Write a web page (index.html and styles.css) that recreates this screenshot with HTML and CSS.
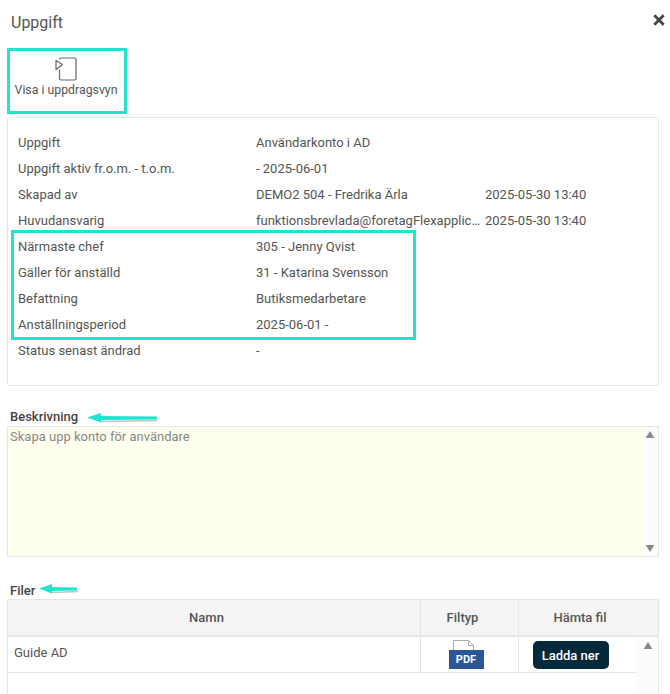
FILE: index.html
```html
<!DOCTYPE html>
<html lang="sv">
<head>
<meta charset="utf-8">
<title>Uppgift</title>
<link rel="stylesheet" href="styles.css">
</head>
<body>
<div class="dialog">
  <header class="head">
    <h1 class="title">Uppgift</h1>
    <svg class="close" viewBox="0 0 12 12" aria-label="Stäng"><path d="M2 2l8 8M10 2l-8 8"/></svg>
  </header>
  <div class="toolbar">
    <button class="view-btn mark">
      <svg class="view-icon" viewBox="0 0 22 24"><path d="M4.500 2.500a1.500 1.500 0 0 1 1.500-1.500h13.500a1.500 1.500 0 0 1 1.500 1.500v19a1.500 1.500 0 0 1-1.500 1.500H6a1.500 1.500 0 0 1-1.500-1.500v-9"/><path d="M1 3.500l6.500 4-6.500 5z"/></svg>
      <span>Visa i uppdragsvyn</span>
    </button>
  </div>
  <section class="panel">
    <div class="row"><span class="label">Uppgift</span><span class="value">Användarkonto i AD</span></div>
    <div class="row"><span class="label">Uppgift aktiv fr.o.m. - t.o.m.</span><span class="value">- 2025-06-01</span></div>
    <div class="row"><span class="label">Skapad av</span><span class="value">DEMO2 504 - Fredrika Ärla</span><span class="date">2025-05-30 13:40</span></div>
    <div class="row"><span class="label">Huvudansvarig</span><span class="value clip">funktionsbrevlada@foretagFlexapplication.se</span><span class="date">2025-05-30 13:40</span></div>
    <div class="group">
      <div class="group-mark mark"></div>
      <div class="row"><span class="label">Närmaste chef</span><span class="value">305 - Jenny Qvist</span></div>
      <div class="row"><span class="label">Gäller för anställd</span><span class="value">31 - Katarina Svensson</span></div>
      <div class="row"><span class="label">Befattning</span><span class="value">Butiksmedarbetare</span></div>
      <div class="row"><span class="label">Anställningsperiod</span><span class="value">2025-06-01 -</span></div>
    </div>
    <div class="row"><span class="label">Status senast ändrad</span><span class="value">-</span></div>
  </section>
  <h2 class="section-title desc-title">Beskrivning
    <svg class="arrow arrow-long" viewBox="0 0 72 10"><path class="arrow-shadow" d="M14 8.500l56-1"/><path class="arrow-fill" d="M0 4.500L14 0v3l56 .5v3l-56 .5v2.500z"/></svg>
  </h2>
  <div class="desc">
    <div class="desc-text">Skapa upp konto för användare</div>
    <div class="scroll">
      <svg class="tri" viewBox="0 0 10 8"><path d="M5 0l5 8H0z"/></svg>
      <svg class="tri" viewBox="0 0 10 8"><path d="M0 0h10L5 8z"/></svg>
    </div>
  </div>
  <h2 class="section-title files-title">Filer
    <svg class="arrow arrow-short" viewBox="0 0 40 10"><path class="arrow-shadow" d="M13 8.500l26-1"/><path class="arrow-fill" d="M0 4.500L13 0v3l25 .5v3l-25 .5v2.500z"/></svg>
  </h2>
  <div class="files">
    <div class="files-head">
      <div class="col-name head-name">Namn</div>
      <div class="col-type head-type">Filtyp</div>
      <div class="col-get">Hämta fil</div>
    </div>
    <div class="files-body">
      <div class="files-rows">
        <div class="file-row">
          <div class="col-name cell-name">Guide AD</div>
          <div class="col-type cell-center">
            <span class="pdf">
              <svg class="pdf-sheet" viewBox="0 0 22 12"><path d="M.5 11V.5h15l5 5V11M15.500.5v5h5"/></svg>
              <span class="pdf-tag">PDF</span>
            </span>
          </div>
          <div class="col-dl cell-center"><button class="dl">Ladda ner</button></div>
        </div>
      </div>
      <div class="scroll scroll-files">
        <svg class="tri" viewBox="0 0 10 8"><path d="M5 0l5 8H0z"/></svg>
      </div>
    </div>
  </div>
</div>
</body>
</html>
```
FILE: styles.css
```css
* { box-sizing: border-box; }
html, body { margin: 0; height: 100%; }
body {
  background: #fff;
  color: #555;
  font-family: Roboto, "Liberation Sans", sans-serif;
  font-size: 13px;
  overflow: hidden;
}
.dialog { padding: 0 11px 0 7px; height: 694px; overflow: hidden; }
.head {
  height: 45px;
  padding-left: 4px;
  display: flex;
  justify-content: space-between;
  align-items: center;
}
.title { margin: 0; font-size: 16px; font-weight: 400; color: #555; }
.close { width: 14px; height: 14px; margin-top: -5px; margin-right: -7px; }
.close path { fill: none; stroke: #444; stroke-width: 2.4; }
.toolbar { display: flex; height: 72px; }
.mark { border: 3px solid #1fe5cf; }
.view-btn {
  width: 120px;
  height: 66px;
  margin-top: 3px;
  padding: 6px 2px 0 0;
  background: #fff;
  color: #555;
  font: inherit;
  font-size: 12.3px;
  display: flex;
  flex-direction: column;
  align-items: center;
  gap: 2px;
}
.view-icon { width: 22px; height: 24px; margin-left: 9px; margin-right: 10px; flex: none; }
.view-icon path { fill: #fff; stroke: #666; stroke-width: 1.200; stroke-linejoin: round; }
.panel {
  height: 269px;
  border: 1px solid #e6e6e6;
  border-radius: 3px;
  padding: 12px 10px 0;
}
.row { display: flex; height: 26px; line-height: 26px; white-space: nowrap; }
.label { width: 238px; flex: none; }
.value { width: 229px; flex: none; }
.clip { overflow: hidden; text-overflow: ellipsis; padding-right: 4px; }
.group { position: relative; }
.group-mark {
  position: absolute;
  left: -7px;
  top: -4px;
  width: 405px;
  height: 110px;
  pointer-events: none;
}
.section-title {
  position: relative;
  margin: 0;
  padding-left: 3px;
  font-size: 13px;
  font-weight: 500;
  color: #444;
  line-height: 16px;
}
.desc-title { padding-top: 23px; height: 40px; }
.files-title { padding-top: 26px; height: 42px; }
.arrow { position: absolute; overflow: visible; }
.arrow-long { left: 80px; top: 27px; width: 72px; height: 10px; }
.arrow-short { left: 32px; top: 27px; width: 40px; height: 10px; }
.arrow-fill { fill: #1fe5cf; }
.arrow-shadow { stroke: #9a9a9a; stroke-width: 1.500; fill: none; opacity: .6; }
.desc {
  height: 131px;
  border: 1px solid #e6e6e6;
  display: flex;
}
.desc-text {
  flex: 1;
  background: #fffff0;
  color: #888;
  padding: 2px 2px;
  line-height: 15px;
}
.scroll {
  width: 14px;
  flex: none;
  background: #fcfcfc;
  display: flex;
  flex-direction: column;
  justify-content: space-between;
  align-items: center;
  padding: 4px 2px 4px 0;
}
.tri { width: 10px; height: 7px; }
.tri path { fill: #8a8a8a; }
.files { border: 1px solid #e6e6e6; height: 120px; }
.files-head {
  display: flex;
  height: 37px;
  line-height: 36px;
  background: #f5f5f5;
  border-bottom: 2px solid #e6e6e6;
  text-align: center;
  font-weight: 500;
  color: #555;
}
.col-name { width: 412px; flex: none; }
.col-type { width: 98px; flex: none; border-left: 1px solid #e6e6e6; }
.col-get { flex: 1; border-left: 1px solid #e6e6e6; padding-right: 17px; }
.head-name { padding-right: 15px; }
.head-type { padding-right: 14px; }
.files-body { display: flex; height: 80px; }
.files-rows { width: 629px; flex: none; }
.file-row { display: flex; height: 36px; border-bottom: 1px solid #e6e6e6; }
.cell-name { padding: 8px 6px 0; line-height: 16px; }
.cell-center { display: flex; justify-content: center; padding-top: 4px; }
.col-dl { width: 119px; flex: none; border-left: 1px solid #e6e6e6; }
.pdf {
  position: relative;
  width: 36px;
  margin-right: 8px;
}
.pdf-sheet { width: 22px; height: 12px; position: absolute; top: -1px; left: 5px; }
.pdf-sheet path { fill: #fff; stroke: #999; stroke-width: .8; }
.pdf-tag {
  position: absolute;
  top: 9px;
  left: 1px;
  width: 35px;
  height: 19px;
  background: #2c5596;
  color: #fff;
  font-size: 11px;
  font-weight: 700;
  line-height: 20px;
  text-align: center;
}
.dl {
  width: 76px;
  height: 28px;
  margin-left: -15px;
  background: #04293a;
  color: #fff;
  border: 0;
  border-radius: 5px;
  font: inherit;
  font-size: 13px;
  font-weight: 500;
  padding: 0;
}
.scroll-files { width: 21px; padding: 5px 0 0 1px; justify-content: flex-start; }
```
